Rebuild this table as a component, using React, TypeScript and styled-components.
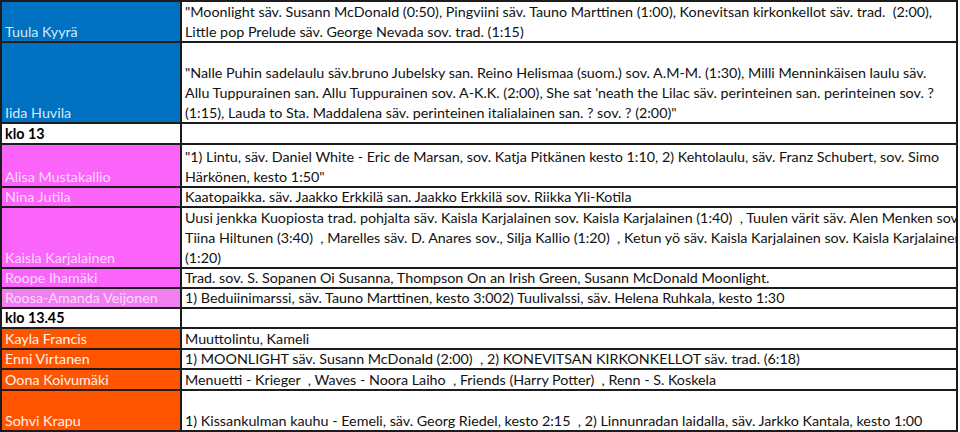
import React from 'react';
import styled, { createGlobalStyle } from 'styled-components';

const GlobalStyle = createGlobalStyle`
  html, body {
    margin: 0;
    padding: 0;
    background: #fff;
  }
  body {
    font-family: Lato, 'Liberation Sans', sans-serif;
    font-size: 14.3px;
    color: #111;
  }
`;

type Tone = 'blue' | 'pink' | 'lilac' | 'orange' | 'white';

const fills: Record<Tone, string> = {
  blue: '#0070c0',
  pink: '#fb64fb',
  lilac: '#f07ff0',
  orange: '#ff5500',
  white: '#ffffff',
};

const inks: Record<Tone, string> = {
  blue: '#d6e8f7',
  pink: '#ffd9ff',
  lilac: '#ffd9ff',
  orange: '#fff2ea',
  white: '#000000',
};

const Sheet = styled.div`
  width: 958px;
  box-sizing: border-box;
  border-top: 2px solid #1c1c1c;
  border-left: 2px solid #1c1c1c;
  border-right: 2px solid #1c1c1c;
  display: flex;
  flex-direction: column;
`;

const Row = styled.div<{ $h: number }>`
  display: flex;
  height: ${(p) => p.$h}px;
  box-sizing: border-box;
  border-bottom: 2px solid #1c1c1c;
`;

const Cell = styled.div`
  display: flex;
  flex-direction: column;
  justify-content: flex-end;
  overflow: hidden;
  box-sizing: border-box;
`;

const NameCell = styled(Cell)<{ $tone: Tone; $bold?: boolean }>`
  width: 180px;
  flex: none;
  padding-left: 3px;
  background: ${(p) => fills[p.$tone]};
  color: ${(p) => inks[p.$tone]};
  font-weight: ${(p) => (p.$bold ? 700 : 400)};
  border-right: 2px solid #1c1c1c;
`;

const TextCell = styled(Cell)`
  flex: 1;
  padding-left: 3px;
`;

const Line = styled.div`
  height: 20px;
  line-height: 22px;
  white-space: pre;
  overflow: hidden;
  flex: none;
`;

type Entry = { name: string; tone: Tone; h: number; bold?: boolean; lines: string[] };

const rows: Entry[] = [
  {
    name: 'Tuula Kyyrä',
    tone: 'blue',
    h: 41,
    lines: [
      '"Moonlight säv. Susann McDonald (0:50), Pingviini säv. Tauno Marttinen (1:00), Konevitsan kirkonkellot säv. trad.  (2:00),',
      'Little pop Prelude säv. George Nevada sov. trad. (1:15)',
    ],
  },
  {
    name: 'Iida Huvila',
    tone: 'blue',
    h: 81,
    lines: [
      '"Nalle Puhin sadelaulu säv.bruno Jubelsky san. Reino Helismaa (suom.) sov. A.M-M. (1:30), Milli Menninkäisen laulu säv.',
      "Allu Tuppurainen san. Allu Tuppurainen sov. A-K.K. (2:00), She sat 'neath the Lilac säv. perinteinen san. perinteinen sov. ?",
      '(1:15), Lauda to Sta. Maddalena säv. perinteinen italialainen san. ? sov. ? (2:00)"',
    ],
  },
  { name: 'klo 13', tone: 'white', h: 21, bold: true, lines: [] },
  {
    name: 'Alisa Mustakallio',
    tone: 'pink',
    h: 43,
    lines: [
      '"1) Lintu, säv. Daniel White - Eric de Marsan, sov. Katja Pitkänen kesto 1:10, 2) Kehtolaulu, säv. Franz Schubert, sov. Simo',
      'Härkönen, kesto 1:50"',
    ],
  },
  {
    name: 'Nina Jutila',
    tone: 'pink',
    h: 20,
    lines: ['Kaatopaikka. säv. Jaakko Erkkilä san. Jaakko Erkkilä sov. Riikka Yli-Kotila'],
  },
  {
    name: 'Kaisla Karjalainen',
    tone: 'pink',
    h: 61,
    lines: [
      'Uusi jenkka Kuopiosta trad. pohjalta säv. Kaisla Karjalainen sov. Kaisla Karjalainen (1:40)  , Tuulen värit säv. Alen Menken sov.',
      'Tiina Hiltunen (3:40)  , Marelles säv. D. Anares sov., Silja Kallio (1:20)  , Ketun yö säv. Kaisla Karjalainen sov. Kaisla Karjalainen',
      '(1:20)',
    ],
  },
  {
    name: 'Roope Ihamäki',
    tone: 'pink',
    h: 20,
    lines: ['Trad. sov. S. Sopanen Oi Susanna, Thompson On an Irish Green, Susann McDonald Moonlight.'],
  },
  {
    name: 'Roosa-Amanda Veijonen',
    tone: 'lilac',
    h: 20,
    lines: ['1) Beduiinimarssi, säv. Tauno Marttinen, kesto 3:002) Tuulivalssi, säv. Helena Ruhkala, kesto 1:30'],
  },
  { name: 'klo 13.45', tone: 'white', h: 20, bold: true, lines: [] },
  { name: 'Kayla Francis', tone: 'orange', h: 21, lines: ['Muuttolintu, Kameli'] },
  {
    name: 'Enni Virtanen',
    tone: 'orange',
    h: 20,
    lines: ['1) MOONLIGHT säv. Susann McDonald (2:00)  , 2) KONEVITSAN KIRKONKELLOT säv. trad. (6:18)'],
  },
  {
    name: 'Oona Koivumäki',
    tone: 'orange',
    h: 21,
    lines: ['Menuetti - Krieger  , Waves - Noora Laiho  , Friends (Harry Potter)  , Renn - S. Koskela'],
  },
  {
    name: 'Sohvi Krapu',
    tone: 'orange',
    h: 41,
    lines: [
      '1) Kissankulman kauhu - Eemeli, säv. Georg Riedel, kesto 2:15  , 2) Linnunradan laidalla, säv. Jarkko Kantala, kesto 1:00',
    ],
  },
];

export default function App() {
  return (
    <>
      <GlobalStyle />
      <Sheet>
        {rows.map((r) => (
          <Row key={r.name} $h={r.h}>
            <NameCell $tone={r.tone} $bold={r.bold}>
              <Line>{r.name}</Line>
            </NameCell>
            <TextCell>
              {r.lines.map((l, i) => (
                <Line key={i}>{l}</Line>
              ))}
            </TextCell>
          </Row>
        ))}
      </Sheet>
    </>
  );
}
